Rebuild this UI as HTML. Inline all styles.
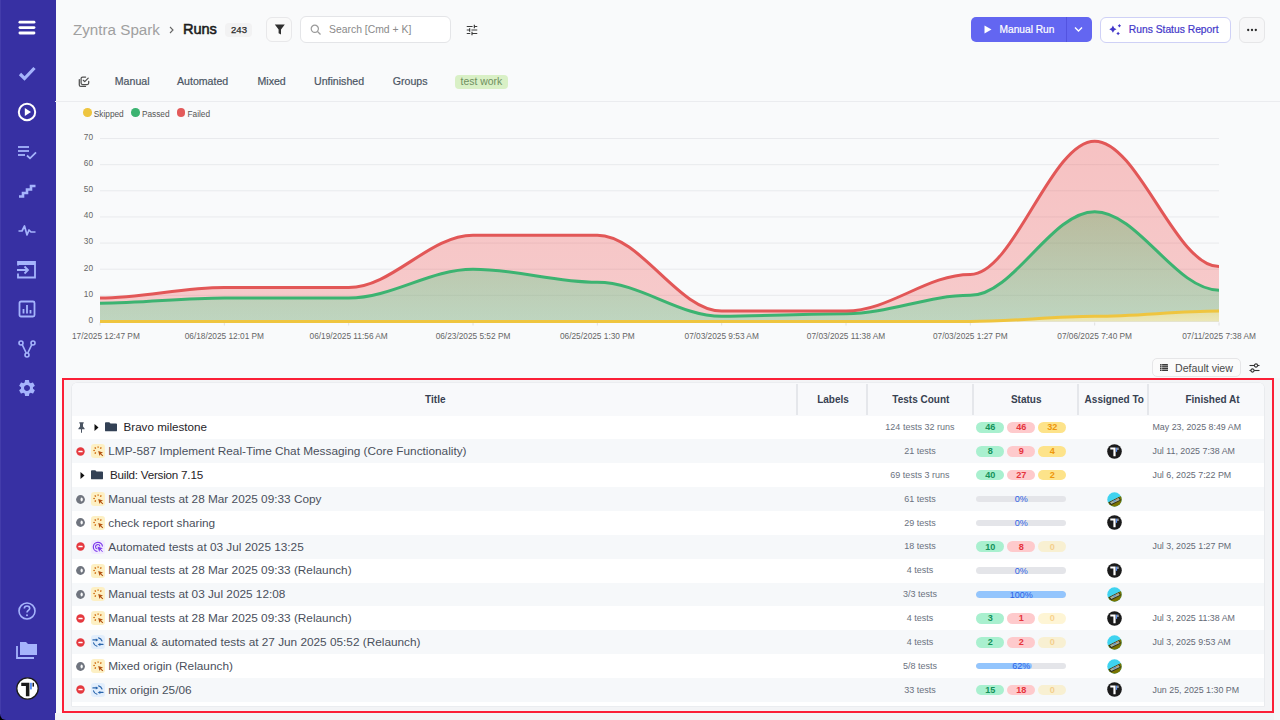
<!DOCTYPE html>
<html><head><meta charset="utf-8">
<style>
*{box-sizing:border-box;margin:0;padding:0}
html,body{width:1280px;height:720px;overflow:hidden}
body{background:#000;font-family:"Liberation Sans",sans-serif;position:relative}
.abs{position:absolute}
#main{position:absolute;left:55px;top:0;width:1225px;height:720px;background:#f9fafb}
#side{position:absolute;left:0;top:0;width:55.5px;height:720px;background:#3730a3;border-bottom-left-radius:6px}
#side svg{position:absolute}
.t{position:absolute;white-space:nowrap;line-height:1}
.btn{position:absolute;border-radius:5px}
</style></head>
<body>
<div id="main"></div>
<div id="side">
  <div class="abs" style="left:0;top:0;width:1px;height:714px;background:#433cab"></div>
  <!-- hamburger -->
  <svg style="left:18px;top:20px" width="18" height="16" viewBox="0 0 18 16"><g stroke="#fff" stroke-width="2.8" stroke-linecap="round"><line x1="1.9" y1="2.2" x2="16.0" y2="2.2"/><line x1="1.9" y1="7.6" x2="16.0" y2="7.6"/><line x1="1.9" y1="13.0" x2="16.0" y2="13.0"/></g></svg>
  <!-- check -->
  <svg style="left:18px;top:66px" width="18" height="15" viewBox="0 0 18 15"><path d="M2 8 L6.5 12.5 L16.5 2" fill="none" stroke="#a5b4fc" stroke-width="3.2"/></svg>
  <!-- play circle -->
  <svg style="left:17px;top:102px" width="20" height="20" viewBox="0 0 20 20"><circle cx="10" cy="10" r="8.2" fill="none" stroke="#fff" stroke-width="2"/><path d="M7.8 6 L14 10 L7.8 14 Z" fill="#fff"/></svg>
  <!-- list check -->
  <svg style="left:17px;top:145px" width="20" height="15" viewBox="0 0 20 15"><g stroke="#a5b4fc" stroke-width="1.8" fill="none"><line x1="1" y1="2" x2="12" y2="2"/><line x1="1" y1="6" x2="12" y2="6"/><line x1="1" y1="10" x2="8" y2="10"/><path d="M10 10.5 L13 13.3 L19 7.3"/></g></svg>
  <!-- stairs -->
  <svg style="left:18px;top:183px" width="19" height="15" viewBox="0 0 19 15"><path d="M1 13.5 H5 V10 H9 V6.5 H13 V3 H17.5" fill="none" stroke="#a5b4fc" stroke-width="2.6"/></svg>
  <!-- pulse -->
  <svg style="left:18px;top:224px" width="18" height="13" viewBox="0 0 18 13"><path d="M0.5 7 H4 L6.5 2 L9 11 L11 6 L13 8 H17.5" fill="none" stroke="#a5b4fc" stroke-width="1.7" stroke-linejoin="round"/></svg>
  <!-- import -->
  <svg style="left:16px;top:260px" width="21" height="19" viewBox="0 0 21 19"><path d="M2 5.5 V2 H19 V17.5 H2 V13.5" fill="none" stroke="#a5b4fc" stroke-width="1.8"/><line x1="2" y1="4" x2="19" y2="4" stroke="#a5b4fc" stroke-width="2"/><path d="M1 10 H12 M8.5 6.5 L12 10 L8.5 13.5" fill="none" stroke="#a5b4fc" stroke-width="1.8"/></svg>
  <!-- chart -->
  <svg style="left:18px;top:300px" width="18" height="18" viewBox="0 0 18 18"><rect x="1.5" y="1.5" width="15" height="15" rx="1.5" fill="none" stroke="#a5b4fc" stroke-width="1.8"/><g stroke="#a5b4fc" stroke-width="1.8"><line x1="5.5" y1="9" x2="5.5" y2="13.5"/><line x1="9" y1="5" x2="9" y2="13.5"/><line x1="12.5" y1="10" x2="12.5" y2="13.5"/></g></svg>
  <!-- fork -->
  <svg style="left:18px;top:340px" width="18" height="18" viewBox="0 0 18 18"><g fill="none" stroke="#a5b4fc" stroke-width="1.6"><circle cx="3" cy="3" r="2"/><circle cx="15" cy="3" r="2"/><circle cx="9" cy="15" r="2"/><path d="M4.2 4.6 L8.2 13 M13.8 4.6 L9.8 13"/></g></svg>
  <!-- gear -->
  <svg style="left:17px;top:378px" width="20" height="20" viewBox="0 0 24 24"><path fill="#a5b4fc" d="M19.14 12.94c.04-.3.06-.61.06-.94 0-.32-.02-.64-.07-.94l2.03-1.58a.49.49 0 0 0 .12-.61l-1.92-3.32a.488.488 0 0 0-.59-.22l-2.39.96c-.5-.38-1.03-.7-1.62-.94l-.36-2.54a.484.484 0 0 0-.48-.41h-3.84c-.24 0-.43.17-.47.41l-.36 2.54c-.59.24-1.13.57-1.62.94l-2.39-.96c-.22-.08-.47 0-.59.22L2.74 8.87c-.12.21-.08.47.12.61l2.03 1.58c-.05.3-.09.63-.09.94s.02.64.07.94l-2.03 1.58a.49.49 0 0 0-.12.61l1.92 3.32c.12.22.37.29.59.22l2.39-.96c.5.38 1.03.7 1.62.94l.36 2.54c.05.24.24.41.48.41h3.84c.24 0 .44-.17.47-.41l.36-2.54c.59-.24 1.13-.56 1.62-.94l2.39.96c.22.08.47 0 .59-.22l1.92-3.32c.12-.22.07-.47-.12-.61l-2.01-1.58zM12 15.6c-1.98 0-3.6-1.62-3.6-3.6s1.62-3.6 3.6-3.6 3.6 1.62 3.6 3.6-1.62 3.6-3.6 3.6z"/></svg>
  <!-- help -->
  <svg style="left:17px;top:601px" width="20" height="20" viewBox="0 0 20 20"><circle cx="10" cy="10" r="8" fill="none" stroke="#a5b4fc" stroke-width="1.6"/><path d="M7.3 7.6 C7.3 6 8.5 5 10 5 C11.6 5 12.7 6 12.7 7.4 C12.7 9.3 10 9.4 10 11.4" fill="none" stroke="#a5b4fc" stroke-width="1.6"/><circle cx="10" cy="14.2" r="1" fill="#a5b4fc"/></svg>
  <!-- folders -->
  <svg style="left:15px;top:640px" width="24" height="20" viewBox="0 0 24 20"><path d="M5 2 H11 L13 4 H22 V15 H5 Z" fill="#a5b4fc"/><path d="M2 6 V18 H19" fill="none" stroke="#a5b4fc" stroke-width="1.8"/></svg>
  <!-- avatar -->
  <svg style="left:16px;top:677px" width="23" height="23" viewBox="0 0 23 23"><circle cx="11.5" cy="11.5" r="10.7" fill="#fff" stroke="#1a1a1a" stroke-width="1.3"/><path d="M5.25 5.8 H13.4 V19.25 H9.9 V8.9 H5.25 Z" fill="#1a1a1a"/><rect x="14" y="5.8" width="1.9" height="6.6" fill="#5b93f5"/><rect x="16.5" y="5.8" width="1.5" height="3.8" fill="#1a1a1a"/></svg>
</div>
<div class="t" style="left:73px;top:22px;font-size:15.2px;color:#a0a0a0">Zyntra Spark</div>
<svg class="abs" style="left:168px;top:26px" width="7" height="8" viewBox="0 0 7 8"><path d="M2 1 L5 4 L2 7" fill="none" stroke="#666" stroke-width="1.1"/></svg>
<div class="t" style="left:183px;top:22px;font-size:14.6px;color:#1c1c1c;-webkit-text-stroke:0.55px #1c1c1c;letter-spacing:-0.1px">Runs</div>
<div class="abs" style="left:225px;top:23px;width:27px;height:14px;border-radius:4px;background:#f2f2f3"></div>
<div class="t" style="left:231px;top:24.5px;font-size:9.6px;color:#2a2a2a;-webkit-text-stroke:0.25px #2a2a2a">243</div>
<!-- filter btn -->
<div class="btn" style="left:266.4px;top:16.9px;width:25.2px;height:25.5px;background:#fafafa;border:1px solid #e8e8ea;border-radius:6px"></div>
<svg class="abs" style="left:273.5px;top:23px" width="12" height="13" viewBox="0 0 12 13"><path d="M0.8 1.5 H10.8 L7.0 6.4 V11.6 L4.6 10.3 V6.4 Z" fill="#303030"/></svg>
<!-- search -->
<div class="btn" style="left:300px;top:16px;width:151px;height:26.5px;background:#fff;border:1px solid #e4e5e8;border-radius:6px"></div>
<svg class="abs" style="left:310px;top:23.5px" width="12" height="12" viewBox="0 0 12 12"><circle cx="4.8" cy="4.8" r="3.6" fill="none" stroke="#9a9a9a" stroke-width="1.2"/><line x1="7.5" y1="7.5" x2="10.5" y2="10.5" stroke="#9a9a9a" stroke-width="1.3"/></svg>
<div class="t" style="left:329px;top:25.3px;font-size:10.4px;color:#8a8a8a">Search [Cmd + K]</div>
<!-- sliders icon -->
<svg class="abs" style="left:465px;top:23.2px" width="14" height="14" viewBox="0 0 24 24"><path fill="#3a3a3a" d="M3 17v2h6v-2H3zM3 5v2h10V5H3zm10 16v-2h8v-2h-8v-2h-2v6h2zM7 9v2H3v2h4v2h2V9H7zm14 4v-2H11v2h10zm-6-4h2V7h4V5h-4V3h-2v6z"/></svg>
<!-- manual run -->
<div class="btn" style="left:971px;top:17px;width:121px;height:25px;background:#6366f1;border-radius:5px"></div>
<div class="abs" style="left:1066px;top:17px;width:1px;height:25px;background:#5353e0"></div>
<svg class="abs" style="left:984px;top:25px" width="8" height="9" viewBox="0 0 8 9"><path d="M0.5 0.5 L7.5 4.5 L0.5 8.5 Z" fill="#fff"/></svg>
<div class="t" style="left:999.5px;top:24.5px;font-size:10.2px;color:#fff;-webkit-text-stroke:0.2px #fff">Manual Run</div>
<svg class="abs" style="left:1074px;top:26px" width="9" height="7" viewBox="0 0 9 7"><path d="M1 1.5 L4.5 5 L8 1.5" fill="none" stroke="#fff" stroke-width="1.4"/></svg>
<!-- runs status report -->
<div class="btn" style="left:1099.5px;top:16.6px;width:131.5px;height:26px;background:#fff;border:1px solid #cfd1f6;border-radius:6px"></div>
<svg class="abs" style="left:1109px;top:22px" width="14" height="15" viewBox="0 0 14 15"><path d="M3.9 3.6 L5.20 5.90 L7.5 7.2 L5.20 8.50 L3.9 10.8 L2.60 8.50 L0.2999999999999998 7.2 L2.60 5.90 Z M10.4 2.0999999999999996 L11.08 3.12 L12.1 3.8 L11.08 4.48 L10.4 5.5 L9.72 4.48 L8.700000000000001 3.8 L9.72 3.12 Z M9.1 9.7 L9.82 10.78 L10.9 11.5 L9.82 12.22 L9.1 13.3 L8.38 12.22 L7.3 11.5 L8.38 10.78 Z" fill="#4338ca"/></svg>
<div class="t" style="left:1128.75px;top:24.5px;font-size:10.3px;color:#4338ca;-webkit-text-stroke:0.2px #4338ca">Runs Status Report</div>
<!-- more -->
<div class="btn" style="left:1239px;top:16.75px;width:25.5px;height:25.75px;background:#f7f7f8;border:1px solid #e6e6e8;border-radius:6px"></div>
<svg class="abs" style="left:1246px;top:28px" width="12" height="4" viewBox="0 0 12 4"><circle cx="2.2" cy="2" r="1.15" fill="#2a2a2a"/><circle cx="6" cy="2" r="1.15" fill="#2a2a2a"/><circle cx="9.8" cy="2" r="1.15" fill="#2a2a2a"/></svg>
<!-- tabs -->
<svg class="abs" style="left:74px;top:72px" width="20" height="20" viewBox="0 0 20 20"><g fill="none" stroke="#505050" stroke-width="1.25" stroke-linecap="round" stroke-linejoin="round"><path d="M11.6 5.1 H8.6 Q7.1 5.1 7.1 6.6 V11.0 Q7.1 12.5 8.6 12.5 H13.2 Q14.7 12.5 14.7 11.0 V9.4"/><path d="M9.3 8.3 L10.7 9.6 L14.2 6.1"/><path d="M5.3 7.6 V12.9 Q5.3 14.4 6.8 14.4 H11.5"/></g></svg>
<div class="t" style="left:114.8px;top:76.3px;font-size:10.6px;color:#4b5563;-webkit-text-stroke:0.2px #4b5563">Manual</div>
<div class="t" style="left:177px;top:76.3px;font-size:10.6px;color:#4b5563;-webkit-text-stroke:0.2px #4b5563">Automated</div>
<div class="t" style="left:257.5px;top:76.3px;font-size:10.6px;color:#4b5563;-webkit-text-stroke:0.2px #4b5563">Mixed</div>
<div class="t" style="left:314px;top:76.3px;font-size:10.6px;color:#4b5563;-webkit-text-stroke:0.2px #4b5563">Unfinished</div>
<div class="t" style="left:392.8px;top:76.3px;font-size:10.6px;color:#4b5563;-webkit-text-stroke:0.2px #4b5563">Groups</div>
<div class="abs" style="left:455px;top:74.5px;width:53px;height:14.5px;border-radius:4px;background:#d9f0c6"></div>
<div class="t" style="left:460.6px;top:76.5px;font-size:10.4px;color:#6f8f5f">test work</div>
<div class="abs" style="left:55px;top:100.5px;width:1225px;height:1px;background:#ebecef"></div>
<!-- legend -->
<div class="abs" style="left:83px;top:108px;width:8.6px;height:8.6px;border-radius:50%;background:#eec540"></div>
<div class="t" style="left:93.75px;top:109.5px;font-size:8.3px;color:#555">Skipped</div>
<div class="abs" style="left:131px;top:108px;width:8.6px;height:8.6px;border-radius:50%;background:#3cb371"></div>
<div class="t" style="left:141.9px;top:109.5px;font-size:8.3px;color:#555">Passed</div>
<div class="abs" style="left:176.6px;top:108px;width:8.6px;height:8.6px;border-radius:50%;background:#e35a5a"></div>
<div class="t" style="left:187.5px;top:109.5px;font-size:8.3px;color:#555">Failed</div>
<!-- default view -->
<div class="btn" style="left:1152px;top:358px;width:89px;height:19px;background:#fbfbfb;border:1px solid #e6e6e8;border-radius:5px"></div>
<svg class="abs" style="left:1160px;top:364.3px" width="8" height="7" viewBox="0 0 8 7"><rect x="0" y="0" width="8" height="7" rx="0.6" fill="#3a3a3a"/><g fill="#fbfbfb"><rect x="0" y="1.6" width="8" height="0.5"/><rect x="0" y="3.3" width="8" height="0.5"/><rect x="0" y="5.0" width="8" height="0.5"/><rect x="1.6" y="0" width="0.5" height="7"/></g></svg>
<div class="t" style="left:1175px;top:362.7px;font-size:10.65px;color:#4a4a4a">Default view</div>
<svg class="abs" style="left:1249px;top:363px" width="11" height="10" viewBox="0 0 11 10"><g fill="none" stroke="#333" stroke-width="1.1"><line x1="0.5" y1="2.5" x2="10.5" y2="2.5"/><line x1="0.5" y1="7.5" x2="10.5" y2="7.5"/><circle cx="7" cy="2.5" r="1.6" fill="#f9fafb"/><circle cx="3.5" cy="7.5" r="1.6" fill="#f9fafb"/></g></svg>

<svg class="chart" width="1280" height="360" viewBox="0 0 1280 360" style="position:absolute;left:0;top:0">
<defs>
<linearGradient id="gr" x1="0" y1="138.5" x2="0" y2="321.5" gradientUnits="userSpaceOnUse">
<stop offset="0" stop-color="#ef4444" stop-opacity="0.31"/>
<stop offset="1" stop-color="#ef4444" stop-opacity="0.26"/>
</linearGradient>
<linearGradient id="gg" x1="0" y1="211.71" x2="0" y2="321.5" gradientUnits="userSpaceOnUse">
<stop offset="0" stop-color="rgb(43,164,64)" stop-opacity="0.30"/>
<stop offset="1" stop-color="rgb(59,238,164)" stop-opacity="0.30"/>
</linearGradient>
<linearGradient id="gy" x1="0" y1="311.04" x2="0" y2="321.5" gradientUnits="userSpaceOnUse">
<stop offset="0" stop-color="rgb(205,190,60)" stop-opacity="0.45"/>
<stop offset="1" stop-color="rgb(215,205,90)" stop-opacity="0.42"/>
</linearGradient>
</defs>
<g font-family="Liberation Sans" font-size="8.3" fill="#666"><line x1="100" y1="321.50" x2="1219" y2="321.50" stroke="#e9eaed" stroke-width="1"/><text x="93" y="322.80" text-anchor="end">0</text><line x1="100" y1="295.36" x2="1219" y2="295.36" stroke="#e9eaed" stroke-width="1"/><text x="93" y="296.66" text-anchor="end">10</text><line x1="100" y1="269.22" x2="1219" y2="269.22" stroke="#e9eaed" stroke-width="1"/><text x="93" y="270.52" text-anchor="end">20</text><line x1="100" y1="243.08" x2="1219" y2="243.08" stroke="#e9eaed" stroke-width="1"/><text x="93" y="244.38" text-anchor="end">30</text><line x1="100" y1="216.94" x2="1219" y2="216.94" stroke="#e9eaed" stroke-width="1"/><text x="93" y="218.24" text-anchor="end">40</text><line x1="100" y1="190.80" x2="1219" y2="190.80" stroke="#e9eaed" stroke-width="1"/><text x="93" y="192.10" text-anchor="end">50</text><line x1="100" y1="164.66" x2="1219" y2="164.66" stroke="#e9eaed" stroke-width="1"/><text x="93" y="165.96" text-anchor="end">60</text><line x1="100" y1="138.52" x2="1219" y2="138.52" stroke="#e9eaed" stroke-width="1"/><text x="93" y="139.82" text-anchor="end">70</text><line x1="100.00" y1="322.5" x2="100.00" y2="325.5" stroke="#e0e0e0"/><text x="72" y="339">17/2025 12:47 PM</text><line x1="224.33" y1="322.5" x2="224.33" y2="325.5" stroke="#e0e0e0"/><text x="224.33" y="339" text-anchor="middle">06/18/2025 12:01 PM</text><line x1="348.67" y1="322.5" x2="348.67" y2="325.5" stroke="#e0e0e0"/><text x="348.67" y="339" text-anchor="middle">06/19/2025 11:56 AM</text><line x1="473.00" y1="322.5" x2="473.00" y2="325.5" stroke="#e0e0e0"/><text x="473.00" y="339" text-anchor="middle">06/23/2025 5:52 PM</text><line x1="597.33" y1="322.5" x2="597.33" y2="325.5" stroke="#e0e0e0"/><text x="597.33" y="339" text-anchor="middle">06/25/2025 1:30 PM</text><line x1="721.67" y1="322.5" x2="721.67" y2="325.5" stroke="#e0e0e0"/><text x="721.67" y="339" text-anchor="middle">07/03/2025 9:53 AM</text><line x1="846.00" y1="322.5" x2="846.00" y2="325.5" stroke="#e0e0e0"/><text x="846.00" y="339" text-anchor="middle">07/03/2025 11:38 AM</text><line x1="970.33" y1="322.5" x2="970.33" y2="325.5" stroke="#e0e0e0"/><text x="970.33" y="339" text-anchor="middle">07/03/2025 1:27 PM</text><line x1="1094.67" y1="322.5" x2="1094.67" y2="325.5" stroke="#e0e0e0"/><text x="1094.67" y="339" text-anchor="middle">07/06/2025 7:40 PM</text><line x1="1219.00" y1="322.5" x2="1219.00" y2="325.5" stroke="#e0e0e0"/><text x="1219.00" y="339" text-anchor="middle">07/11/2025 7:38 AM</text></g>
<path d="M100.00,297.97 C143.52,297.97 180.82,287.52 224.33,287.52 C267.85,287.52 305.15,287.52 348.67,287.52 C392.18,287.52 429.48,235.24 473.00,235.24 C516.52,235.24 553.82,235.24 597.33,235.24 C640.85,235.24 678.15,311.04 721.67,311.04 C765.18,311.04 802.48,311.04 846.00,311.04 C889.52,311.04 926.82,274.45 970.33,274.45 C1013.85,274.45 1051.15,141.13 1094.67,141.13 C1138.18,141.13 1175.48,266.61 1219.00,266.61 L1219.00,311.04 C1175.48,311.04 1138.18,316.27 1094.67,316.27 C1051.15,316.27 1013.85,321.50 970.33,321.50 C926.82,321.50 889.52,321.50 846.00,321.50 C802.48,321.50 765.18,321.50 721.67,321.50 C678.15,321.50 640.85,321.50 597.33,321.50 C553.82,321.50 516.52,321.50 473.00,321.50 C429.48,321.50 392.18,321.50 348.67,321.50 C305.15,321.50 267.85,321.50 224.33,321.50 C180.82,321.50 143.52,321.50 100.00,321.50 Z" fill="url(#gr)"/>
<path d="M100.00,303.20 C143.52,303.20 180.82,297.97 224.33,297.97 C267.85,297.97 305.15,297.97 348.67,297.97 C392.18,297.97 429.48,269.22 473.00,269.22 C516.52,269.22 553.82,282.29 597.33,282.29 C640.85,282.29 678.15,316.27 721.67,316.27 C765.18,316.27 802.48,313.66 846.00,313.66 C889.52,313.66 926.82,295.36 970.33,295.36 C1013.85,295.36 1051.15,211.71 1094.67,211.71 C1138.18,211.71 1175.48,290.13 1219.00,290.13 L1219.00,311.04 C1175.48,311.04 1138.18,316.27 1094.67,316.27 C1051.15,316.27 1013.85,321.50 970.33,321.50 C926.82,321.50 889.52,321.50 846.00,321.50 C802.48,321.50 765.18,321.50 721.67,321.50 C678.15,321.50 640.85,321.50 597.33,321.50 C553.82,321.50 516.52,321.50 473.00,321.50 C429.48,321.50 392.18,321.50 348.67,321.50 C305.15,321.50 267.85,321.50 224.33,321.50 C180.82,321.50 143.52,321.50 100.00,321.50 Z" fill="url(#gg)"/>
<path d="M100.00,321.50 C143.52,321.50 180.82,321.50 224.33,321.50 C267.85,321.50 305.15,321.50 348.67,321.50 C392.18,321.50 429.48,321.50 473.00,321.50 C516.52,321.50 553.82,321.50 597.33,321.50 C640.85,321.50 678.15,321.50 721.67,321.50 C765.18,321.50 802.48,321.50 846.00,321.50 C889.52,321.50 926.82,321.50 970.33,321.50 C1013.85,321.50 1051.15,316.27 1094.67,316.27 C1138.18,316.27 1175.48,311.04 1219.00,311.04 L1219,321.5 L100,321.5 Z" fill="url(#gy)"/>
<path d="M100.00,321.50 C143.52,321.50 180.82,321.50 224.33,321.50 C267.85,321.50 305.15,321.50 348.67,321.50 C392.18,321.50 429.48,321.50 473.00,321.50 C516.52,321.50 553.82,321.50 597.33,321.50 C640.85,321.50 678.15,321.50 721.67,321.50 C765.18,321.50 802.48,321.50 846.00,321.50 C889.52,321.50 926.82,321.50 970.33,321.50 C1013.85,321.50 1051.15,316.27 1094.67,316.27 C1138.18,316.27 1175.48,311.04 1219.00,311.04" fill="none" stroke="#efc53f" stroke-width="3"/>
<path d="M100.00,303.20 C143.52,303.20 180.82,297.97 224.33,297.97 C267.85,297.97 305.15,297.97 348.67,297.97 C392.18,297.97 429.48,269.22 473.00,269.22 C516.52,269.22 553.82,282.29 597.33,282.29 C640.85,282.29 678.15,316.27 721.67,316.27 C765.18,316.27 802.48,313.66 846.00,313.66 C889.52,313.66 926.82,295.36 970.33,295.36 C1013.85,295.36 1051.15,211.71 1094.67,211.71 C1138.18,211.71 1175.48,290.13 1219.00,290.13" fill="none" stroke="#3cb371" stroke-width="3"/>
<path d="M100.00,297.97 C143.52,297.97 180.82,287.52 224.33,287.52 C267.85,287.52 305.15,287.52 348.67,287.52 C392.18,287.52 429.48,235.24 473.00,235.24 C516.52,235.24 553.82,235.24 597.33,235.24 C640.85,235.24 678.15,311.04 721.67,311.04 C765.18,311.04 802.48,311.04 846.00,311.04 C889.52,311.04 926.82,274.45 970.33,274.45 C1013.85,274.45 1051.15,141.13 1094.67,141.13 C1138.18,141.13 1175.48,266.61 1219.00,266.61" fill="none" stroke="#e25757" stroke-width="3"/>
</svg>
<div class="abs" style="left:55px;top:713px;width:1225px;height:7px;background:linear-gradient(#f3f4f6,#f1f2f4)"></div>
<div class="abs" style="left:1274px;top:378px;width:6px;height:342px;background:#f5f6f8"></div>
<div class="abs" style="left:62px;top:378px;width:1212px;height:335px;border:2px solid #fb1f37;background:#f3f4f6"></div>
<div class="abs" style="left:72.3px;top:383px;width:1192px;height:322.5px;background:#fff;border-top-left-radius:5px;border-top-right-radius:5px;box-shadow:0 0 0 0.6px #e3e5e9"></div>
<div class="abs" style="left:72.3px;top:383px;width:1192px;height:32.6px;background:#f8f9fb;border-top-left-radius:5px;border-top-right-radius:5px"></div>
<div class="abs" style="left:795.8px;top:384px;width:2px;height:31px;background:#e5e7eb"></div>
<div class="abs" style="left:865.9px;top:384px;width:2px;height:31px;background:#e5e7eb"></div>
<div class="abs" style="left:971.6px;top:384px;width:2px;height:31px;background:#e5e7eb"></div>
<div class="abs" style="left:1077.4px;top:384px;width:2px;height:31px;background:#e5e7eb"></div>
<div class="abs" style="left:1146.6px;top:384px;width:2px;height:31px;background:#e5e7eb"></div>
<div class="t" style="left:375.3px;top:395px;width:120px;text-align:center;font-size:10px;font-weight:700;color:#374151">Title</div>
<div class="t" style="left:773px;top:395px;width:120px;text-align:center;font-size:10px;font-weight:700;color:#374151">Labels</div>
<div class="t" style="left:860.9px;top:395px;width:120px;text-align:center;font-size:10px;font-weight:700;color:#374151">Tests Count</div>
<div class="t" style="left:966.2px;top:395px;width:120px;text-align:center;font-size:10px;font-weight:700;color:#374151">Status</div>
<div class="t" style="left:1054.25px;top:395px;width:120px;text-align:center;font-size:10px;font-weight:700;color:#374151">Assigned To</div>
<div class="t" style="left:1152.5px;top:395px;width:120px;text-align:center;font-size:10px;font-weight:700;color:#374151">Finished At</div>
<div class="abs" style="left:72.3px;top:415.50px;width:1192px;height:23.86px;background:#fff"></div>
<div class="abs" style="left:77.5px;top:421.93px;line-height:0"><svg width="7" height="11" viewBox="0 0 7 11"><path d="M1.3 0.3 H5.7 V1.4 H5 V4.6 L6.6 6.4 V7.2 H4 V10.8 H3 V7.2 H0.4 V6.4 L2 4.6 V1.4 H1.3 Z" fill="#4b5563"/></svg></div>
<div class="abs" style="left:94px;top:423.93px;line-height:0"><svg width="5" height="7" viewBox="0 0 5 7"><path d="M0.5 0 L4.5 3.5 L0.5 7 Z" fill="#111"/></svg></div>
<div class="abs" style="left:104.5px;top:422.43px;line-height:0"><svg width="12" height="9.5" viewBox="0 0 13 10"><path d="M0 1 Q0 0 1 0 H4.6 L6 1.4 H12 Q13 1.4 13 2.4 V9 Q13 10 12 10 H1 Q0 10 0 9 Z" fill="#334155"/></svg></div>
<div class="t" style="left:123.5px;top:421.23px;font-size:11.65px;color:#1f2328">Bravo milestone</div>
<div class="t" style="left:867.9px;top:423.13px;width:104px;text-align:center;font-size:9px;color:#6b7280">124 tests 32 runs</div>
<div class="abs" style="left:976.3px;top:422.08px;width:28px;height:10.7px;border-radius:6px;background:#a9f0cf;opacity:1"></div><div class="t" style="left:976.3px;top:423.33px;width:28px;text-align:center;font-size:9.1px;font-weight:700;color:#13925a;opacity:1">46</div>
<div class="abs" style="left:1007.25px;top:422.08px;width:28px;height:10.7px;border-radius:6px;background:#fecacc;opacity:1"></div><div class="t" style="left:1007.25px;top:423.33px;width:28px;text-align:center;font-size:9.1px;font-weight:700;color:#e5343d;opacity:1">46</div>
<div class="abs" style="left:1038.2px;top:422.08px;width:28px;height:10.7px;border-radius:6px;background:#fde38a;opacity:1"></div><div class="t" style="left:1038.2px;top:423.33px;width:28px;text-align:center;font-size:9.1px;font-weight:700;color:#ee960b;opacity:1">32</div>
<div class="t" style="left:1152.5px;top:423.13px;font-size:8.85px;color:#646a76">May 23, 2025 8:49 AM</div>
<div class="abs" style="left:72.3px;top:439.36px;width:1192px;height:23.86px;background:#f6f8fa"></div>
<div class="abs" style="left:76px;top:446.79px;line-height:0"><svg width="9" height="9" viewBox="0 0 9 9"><circle cx="4.5" cy="4.5" r="4.2" fill="#e5393f"/><rect x="2.3" y="3.8" width="4.4" height="1.45" rx="0.6" fill="#fff"/></svg></div>
<div class="abs" style="left:91.3px;top:444.29px;line-height:0"><svg width="14" height="14" viewBox="0 0 14 14"><rect width="14" height="14" rx="3.2" fill="#fdf0c4"/><g fill="#d2741c"><ellipse cx="4.3" cy="4.0" rx="0.75" ry="0.95" transform="rotate(-35 4.3 4.0)"/><ellipse cx="7.1" cy="3.1" rx="0.7" ry="0.95"/><ellipse cx="9.8" cy="4.0" rx="0.75" ry="0.95" transform="rotate(35 9.8 4.0)"/><ellipse cx="3.1" cy="6.5" rx="0.95" ry="0.7"/><ellipse cx="4.3" cy="9.0" rx="0.75" ry="0.95" transform="rotate(35 4.3 9.0)"/></g><path d="M7.2 6.9 L12.0 8.6 L10.0 9.5 L12.2 11.6 L11.5 12.3 L9.3 10.2 L8.5 12.0 Z" fill="#b4500f"/></svg></div>
<div class="t" style="left:108.3px;top:446.19px;font-size:11.8px;color:#4a505c">LMP-587 Implement Real-Time Chat Messaging (Core Functionality)</div>
<div class="t" style="left:867.9px;top:446.99px;width:104px;text-align:center;font-size:9px;color:#6b7280">21 tests</div>
<div class="abs" style="left:976.3px;top:445.94px;width:28px;height:10.7px;border-radius:6px;background:#a9f0cf;opacity:1"></div><div class="t" style="left:976.3px;top:447.19px;width:28px;text-align:center;font-size:9.1px;font-weight:700;color:#13925a;opacity:1">8</div>
<div class="abs" style="left:1007.25px;top:445.94px;width:28px;height:10.7px;border-radius:6px;background:#fecacc;opacity:1"></div><div class="t" style="left:1007.25px;top:447.19px;width:28px;text-align:center;font-size:9.1px;font-weight:700;color:#e5343d;opacity:1">9</div>
<div class="abs" style="left:1038.2px;top:445.94px;width:28px;height:10.7px;border-radius:6px;background:#fde38a;opacity:1"></div><div class="t" style="left:1038.2px;top:447.19px;width:28px;text-align:center;font-size:9.1px;font-weight:700;color:#ee960b;opacity:1">4</div>
<div class="abs" style="left:1106.5px;top:443.79px;line-height:0"><svg width="15" height="15" viewBox="0 0 15 15"><circle cx="7.5" cy="7.5" r="7.3" fill="#1b1b1b"/><path d="M3.3 3.6 H8.6 V12.2 H6.4 V5.6 H3.3 Z" fill="#fff"/><rect x="9.0" y="3.6" width="1.1" height="4.2" fill="#5b8ff0"/><rect x="10.5" y="3.6" width="0.9" height="2.4" fill="#fff"/></svg></div>
<div class="t" style="left:1152.5px;top:446.99px;font-size:8.85px;color:#646a76">Jul 11, 2025 7:38 AM</div>
<div class="abs" style="left:72.3px;top:463.22px;width:1192px;height:23.86px;background:#fff"></div>
<div class="abs" style="left:80px;top:471.65px;line-height:0"><svg width="5" height="7" viewBox="0 0 5 7"><path d="M0.5 0 L4.5 3.5 L0.5 7 Z" fill="#111"/></svg></div>
<div class="abs" style="left:90.5px;top:470.15px;line-height:0"><svg width="12" height="9.5" viewBox="0 0 13 10"><path d="M0 1 Q0 0 1 0 H4.6 L6 1.4 H12 Q13 1.4 13 2.4 V9 Q13 10 12 10 H1 Q0 10 0 9 Z" fill="#334155"/></svg></div>
<div class="t" style="left:110px;top:468.75px;font-size:11.65px;color:#1f2328;letter-spacing:-0.22px">Build: Version 7.15</div>
<div class="t" style="left:867.9px;top:470.85px;width:104px;text-align:center;font-size:9px;color:#6b7280">69 tests 3 runs</div>
<div class="abs" style="left:976.3px;top:469.80px;width:28px;height:10.7px;border-radius:6px;background:#a9f0cf;opacity:1"></div><div class="t" style="left:976.3px;top:471.05px;width:28px;text-align:center;font-size:9.1px;font-weight:700;color:#13925a;opacity:1">40</div>
<div class="abs" style="left:1007.25px;top:469.80px;width:28px;height:10.7px;border-radius:6px;background:#fecacc;opacity:1"></div><div class="t" style="left:1007.25px;top:471.05px;width:28px;text-align:center;font-size:9.1px;font-weight:700;color:#e5343d;opacity:1">27</div>
<div class="abs" style="left:1038.2px;top:469.80px;width:28px;height:10.7px;border-radius:6px;background:#fde38a;opacity:1"></div><div class="t" style="left:1038.2px;top:471.05px;width:28px;text-align:center;font-size:9.1px;font-weight:700;color:#ee960b;opacity:1">2</div>
<div class="t" style="left:1152.5px;top:470.85px;font-size:8.85px;color:#646a76">Jul 6, 2025 7:22 PM</div>
<div class="abs" style="left:72.3px;top:487.08px;width:1192px;height:23.86px;background:#f6f8fa"></div>
<div class="abs" style="left:76px;top:494.51px;line-height:0"><svg width="9" height="9" viewBox="0 0 9 9"><circle cx="4.5" cy="4.5" r="4.4" fill="#70757f"/><path d="M5.0 2.6 A1.9 1.9 0 0 1 5.0 6.4 Q3.9 4.5 5.0 2.6 Z" fill="#fafbfc"/></svg></div>
<div class="abs" style="left:91.3px;top:492.01px;line-height:0"><svg width="14" height="14" viewBox="0 0 14 14"><rect width="14" height="14" rx="3.2" fill="#fdf0c4"/><g fill="#d2741c"><ellipse cx="4.3" cy="4.0" rx="0.75" ry="0.95" transform="rotate(-35 4.3 4.0)"/><ellipse cx="7.1" cy="3.1" rx="0.7" ry="0.95"/><ellipse cx="9.8" cy="4.0" rx="0.75" ry="0.95" transform="rotate(35 9.8 4.0)"/><ellipse cx="3.1" cy="6.5" rx="0.95" ry="0.7"/><ellipse cx="4.3" cy="9.0" rx="0.75" ry="0.95" transform="rotate(35 4.3 9.0)"/></g><path d="M7.2 6.9 L12.0 8.6 L10.0 9.5 L12.2 11.6 L11.5 12.3 L9.3 10.2 L8.5 12.0 Z" fill="#b4500f"/></svg></div>
<div class="t" style="left:108.3px;top:493.91px;font-size:11.8px;color:#4a505c">Manual tests at 28 Mar 2025 09:33 Copy</div>
<div class="t" style="left:867.9px;top:494.71px;width:104px;text-align:center;font-size:9px;color:#6b7280">61 tests</div>
<div class="abs" style="left:976.3px;top:495.71px;width:90px;height:6.7px;border-radius:4px;background:#e4e5e9;overflow:hidden"><div style="width:0%;height:100%;background:#93c5fd;border-radius:4px"></div></div>
<div class="t" style="left:976.3px;top:495.21px;width:90px;text-align:center;font-size:9px;color:#2d62e6">0%</div>
<div class="abs" style="left:1106.5px;top:491.51px;line-height:0"><svg width="15" height="15" viewBox="0 0 15 15"><defs><clipPath id="avc3"><circle cx="7.5" cy="7.5" r="7.2"/></clipPath></defs><g clip-path="url(#avc3)"><rect width="15" height="15" fill="#3fd3f0"/><path d="M0 11 L15 3.5 V15 H0 Z" fill="#7a7400"/><path d="M1.8 10.2 L11.8 5.2 L14 8.2 L4 13.2 Z" fill="#2a2a22"/><path d="M3 10.2 L11.5 6 L12.8 7.9 L4.3 12.1 Z" fill="#a9b59a"/><path d="M6 9 L8.5 7.7 L9.3 8.8 L6.8 10.1 Z" fill="#5a8fd8"/><path d="M9 7.2 L11 6.2 L11.6 7 L9.6 8 Z" fill="#c98b5a"/></g></svg></div>
<div class="abs" style="left:72.3px;top:510.94px;width:1192px;height:23.86px;background:#fff"></div>
<div class="abs" style="left:76px;top:518.37px;line-height:0"><svg width="9" height="9" viewBox="0 0 9 9"><circle cx="4.5" cy="4.5" r="4.4" fill="#70757f"/><path d="M5.0 2.6 A1.9 1.9 0 0 1 5.0 6.4 Q3.9 4.5 5.0 2.6 Z" fill="#fafbfc"/></svg></div>
<div class="abs" style="left:91.3px;top:515.87px;line-height:0"><svg width="14" height="14" viewBox="0 0 14 14"><rect width="14" height="14" rx="3.2" fill="#fdf0c4"/><g fill="#d2741c"><ellipse cx="4.3" cy="4.0" rx="0.75" ry="0.95" transform="rotate(-35 4.3 4.0)"/><ellipse cx="7.1" cy="3.1" rx="0.7" ry="0.95"/><ellipse cx="9.8" cy="4.0" rx="0.75" ry="0.95" transform="rotate(35 9.8 4.0)"/><ellipse cx="3.1" cy="6.5" rx="0.95" ry="0.7"/><ellipse cx="4.3" cy="9.0" rx="0.75" ry="0.95" transform="rotate(35 4.3 9.0)"/></g><path d="M7.2 6.9 L12.0 8.6 L10.0 9.5 L12.2 11.6 L11.5 12.3 L9.3 10.2 L8.5 12.0 Z" fill="#b4500f"/></svg></div>
<div class="t" style="left:108.3px;top:517.77px;font-size:11.8px;color:#4a505c">check report sharing</div>
<div class="t" style="left:867.9px;top:518.57px;width:104px;text-align:center;font-size:9px;color:#6b7280">29 tests</div>
<div class="abs" style="left:976.3px;top:519.57px;width:90px;height:6.7px;border-radius:4px;background:#e4e5e9;overflow:hidden"><div style="width:0%;height:100%;background:#93c5fd;border-radius:4px"></div></div>
<div class="t" style="left:976.3px;top:519.07px;width:90px;text-align:center;font-size:9px;color:#2d62e6">0%</div>
<div class="abs" style="left:1106.5px;top:515.37px;line-height:0"><svg width="15" height="15" viewBox="0 0 15 15"><circle cx="7.5" cy="7.5" r="7.3" fill="#1b1b1b"/><path d="M3.3 3.6 H8.6 V12.2 H6.4 V5.6 H3.3 Z" fill="#fff"/><rect x="9.0" y="3.6" width="1.1" height="4.2" fill="#5b8ff0"/><rect x="10.5" y="3.6" width="0.9" height="2.4" fill="#fff"/></svg></div>
<div class="abs" style="left:72.3px;top:534.80px;width:1192px;height:23.86px;background:#f6f8fa"></div>
<div class="abs" style="left:76px;top:542.23px;line-height:0"><svg width="9" height="9" viewBox="0 0 9 9"><circle cx="4.5" cy="4.5" r="4.2" fill="#e5393f"/><rect x="2.3" y="3.8" width="4.4" height="1.45" rx="0.6" fill="#fff"/></svg></div>
<div class="abs" style="left:91.3px;top:539.73px;line-height:0"><svg width="14" height="14" viewBox="0 0 14 14"><rect width="14" height="14" rx="3" fill="#f1ebfd"/><g fill="none" stroke="#7c3aed" stroke-width="1.2"><path d="M11.5 6.5 A4.6 4.6 0 1 0 6.5 11.5"/><path d="M8.9 6.4 A2.2 2.2 0 1 0 6.4 8.9"/></g><path d="M6.4 6.4 L11.8 8.3 L9.7 9.2 L11.9 11.4 L11.3 12 L9.1 9.8 L8.2 11.9 Z" fill="#7c3aed"/></svg></div>
<div class="t" style="left:108.3px;top:541.63px;font-size:11.8px;color:#4a505c">Automated tests at 03 Jul 2025 13:25</div>
<div class="t" style="left:867.9px;top:542.43px;width:104px;text-align:center;font-size:9px;color:#6b7280">18 tests</div>
<div class="abs" style="left:976.3px;top:541.38px;width:28px;height:10.7px;border-radius:6px;background:#a9f0cf;opacity:1"></div><div class="t" style="left:976.3px;top:542.63px;width:28px;text-align:center;font-size:9.1px;font-weight:700;color:#13925a;opacity:1">10</div>
<div class="abs" style="left:1007.25px;top:541.38px;width:28px;height:10.7px;border-radius:6px;background:#fecacc;opacity:1"></div><div class="t" style="left:1007.25px;top:542.63px;width:28px;text-align:center;font-size:9.1px;font-weight:700;color:#e5343d;opacity:1">8</div>
<div class="abs" style="left:1038.2px;top:541.38px;width:28px;height:10.7px;border-radius:6px;background:#fde38a;opacity:0.36"></div><div class="t" style="left:1038.2px;top:542.63px;width:28px;text-align:center;font-size:9.1px;font-weight:700;color:#ee960b;opacity:0.36">0</div>
<div class="t" style="left:1152.5px;top:542.43px;font-size:8.85px;color:#646a76">Jul 3, 2025 1:27 PM</div>
<div class="abs" style="left:72.3px;top:558.66px;width:1192px;height:23.86px;background:#fff"></div>
<div class="abs" style="left:76px;top:566.09px;line-height:0"><svg width="9" height="9" viewBox="0 0 9 9"><circle cx="4.5" cy="4.5" r="4.4" fill="#70757f"/><path d="M5.0 2.6 A1.9 1.9 0 0 1 5.0 6.4 Q3.9 4.5 5.0 2.6 Z" fill="#fafbfc"/></svg></div>
<div class="abs" style="left:91.3px;top:563.59px;line-height:0"><svg width="14" height="14" viewBox="0 0 14 14"><rect width="14" height="14" rx="3.2" fill="#fdf0c4"/><g fill="#d2741c"><ellipse cx="4.3" cy="4.0" rx="0.75" ry="0.95" transform="rotate(-35 4.3 4.0)"/><ellipse cx="7.1" cy="3.1" rx="0.7" ry="0.95"/><ellipse cx="9.8" cy="4.0" rx="0.75" ry="0.95" transform="rotate(35 9.8 4.0)"/><ellipse cx="3.1" cy="6.5" rx="0.95" ry="0.7"/><ellipse cx="4.3" cy="9.0" rx="0.75" ry="0.95" transform="rotate(35 4.3 9.0)"/></g><path d="M7.2 6.9 L12.0 8.6 L10.0 9.5 L12.2 11.6 L11.5 12.3 L9.3 10.2 L8.5 12.0 Z" fill="#b4500f"/></svg></div>
<div class="t" style="left:108.3px;top:565.49px;font-size:11.8px;color:#4a505c">Manual tests at 28 Mar 2025 09:33 (Relaunch)</div>
<div class="t" style="left:867.9px;top:566.29px;width:104px;text-align:center;font-size:9px;color:#6b7280">4 tests</div>
<div class="abs" style="left:976.3px;top:567.29px;width:90px;height:6.7px;border-radius:4px;background:#e4e5e9;overflow:hidden"><div style="width:0%;height:100%;background:#93c5fd;border-radius:4px"></div></div>
<div class="t" style="left:976.3px;top:566.79px;width:90px;text-align:center;font-size:9px;color:#2d62e6">0%</div>
<div class="abs" style="left:1106.5px;top:563.09px;line-height:0"><svg width="15" height="15" viewBox="0 0 15 15"><circle cx="7.5" cy="7.5" r="7.3" fill="#1b1b1b"/><path d="M3.3 3.6 H8.6 V12.2 H6.4 V5.6 H3.3 Z" fill="#fff"/><rect x="9.0" y="3.6" width="1.1" height="4.2" fill="#5b8ff0"/><rect x="10.5" y="3.6" width="0.9" height="2.4" fill="#fff"/></svg></div>
<div class="abs" style="left:72.3px;top:582.52px;width:1192px;height:23.86px;background:#f6f8fa"></div>
<div class="abs" style="left:76px;top:589.95px;line-height:0"><svg width="9" height="9" viewBox="0 0 9 9"><circle cx="4.5" cy="4.5" r="4.4" fill="#70757f"/><path d="M5.0 2.6 A1.9 1.9 0 0 1 5.0 6.4 Q3.9 4.5 5.0 2.6 Z" fill="#fafbfc"/></svg></div>
<div class="abs" style="left:91.3px;top:587.45px;line-height:0"><svg width="14" height="14" viewBox="0 0 14 14"><rect width="14" height="14" rx="3.2" fill="#fdf0c4"/><g fill="#d2741c"><ellipse cx="4.3" cy="4.0" rx="0.75" ry="0.95" transform="rotate(-35 4.3 4.0)"/><ellipse cx="7.1" cy="3.1" rx="0.7" ry="0.95"/><ellipse cx="9.8" cy="4.0" rx="0.75" ry="0.95" transform="rotate(35 9.8 4.0)"/><ellipse cx="3.1" cy="6.5" rx="0.95" ry="0.7"/><ellipse cx="4.3" cy="9.0" rx="0.75" ry="0.95" transform="rotate(35 4.3 9.0)"/></g><path d="M7.2 6.9 L12.0 8.6 L10.0 9.5 L12.2 11.6 L11.5 12.3 L9.3 10.2 L8.5 12.0 Z" fill="#b4500f"/></svg></div>
<div class="t" style="left:108.3px;top:589.35px;font-size:11.8px;color:#4a505c">Manual tests at 03 Jul 2025 12:08</div>
<div class="t" style="left:867.9px;top:590.15px;width:104px;text-align:center;font-size:9px;color:#6b7280">3/3 tests</div>
<div class="abs" style="left:976.3px;top:591.15px;width:90px;height:6.7px;border-radius:4px;background:#e4e5e9;overflow:hidden"><div style="width:100%;height:100%;background:#93c5fd;border-radius:4px"></div></div>
<div class="t" style="left:976.3px;top:590.65px;width:90px;text-align:center;font-size:9px;color:#2d62e6">100%</div>
<div class="abs" style="left:1106.5px;top:586.95px;line-height:0"><svg width="15" height="15" viewBox="0 0 15 15"><defs><clipPath id="avc7"><circle cx="7.5" cy="7.5" r="7.2"/></clipPath></defs><g clip-path="url(#avc7)"><rect width="15" height="15" fill="#3fd3f0"/><path d="M0 11 L15 3.5 V15 H0 Z" fill="#7a7400"/><path d="M1.8 10.2 L11.8 5.2 L14 8.2 L4 13.2 Z" fill="#2a2a22"/><path d="M3 10.2 L11.5 6 L12.8 7.9 L4.3 12.1 Z" fill="#a9b59a"/><path d="M6 9 L8.5 7.7 L9.3 8.8 L6.8 10.1 Z" fill="#5a8fd8"/><path d="M9 7.2 L11 6.2 L11.6 7 L9.6 8 Z" fill="#c98b5a"/></g></svg></div>
<div class="abs" style="left:72.3px;top:606.38px;width:1192px;height:23.86px;background:#fff"></div>
<div class="abs" style="left:76px;top:613.81px;line-height:0"><svg width="9" height="9" viewBox="0 0 9 9"><circle cx="4.5" cy="4.5" r="4.2" fill="#e5393f"/><rect x="2.3" y="3.8" width="4.4" height="1.45" rx="0.6" fill="#fff"/></svg></div>
<div class="abs" style="left:91.3px;top:611.31px;line-height:0"><svg width="14" height="14" viewBox="0 0 14 14"><rect width="14" height="14" rx="3.2" fill="#fdf0c4"/><g fill="#d2741c"><ellipse cx="4.3" cy="4.0" rx="0.75" ry="0.95" transform="rotate(-35 4.3 4.0)"/><ellipse cx="7.1" cy="3.1" rx="0.7" ry="0.95"/><ellipse cx="9.8" cy="4.0" rx="0.75" ry="0.95" transform="rotate(35 9.8 4.0)"/><ellipse cx="3.1" cy="6.5" rx="0.95" ry="0.7"/><ellipse cx="4.3" cy="9.0" rx="0.75" ry="0.95" transform="rotate(35 4.3 9.0)"/></g><path d="M7.2 6.9 L12.0 8.6 L10.0 9.5 L12.2 11.6 L11.5 12.3 L9.3 10.2 L8.5 12.0 Z" fill="#b4500f"/></svg></div>
<div class="t" style="left:108.3px;top:613.21px;font-size:11.8px;color:#4a505c">Manual tests at 28 Mar 2025 09:33 (Relaunch)</div>
<div class="t" style="left:867.9px;top:614.01px;width:104px;text-align:center;font-size:9px;color:#6b7280">4 tests</div>
<div class="abs" style="left:976.3px;top:612.96px;width:28px;height:10.7px;border-radius:6px;background:#a9f0cf;opacity:1"></div><div class="t" style="left:976.3px;top:614.21px;width:28px;text-align:center;font-size:9.1px;font-weight:700;color:#13925a;opacity:1">3</div>
<div class="abs" style="left:1007.25px;top:612.96px;width:28px;height:10.7px;border-radius:6px;background:#fecacc;opacity:1"></div><div class="t" style="left:1007.25px;top:614.21px;width:28px;text-align:center;font-size:9.1px;font-weight:700;color:#e5343d;opacity:1">1</div>
<div class="abs" style="left:1038.2px;top:612.96px;width:28px;height:10.7px;border-radius:6px;background:#fde38a;opacity:0.36"></div><div class="t" style="left:1038.2px;top:614.21px;width:28px;text-align:center;font-size:9.1px;font-weight:700;color:#ee960b;opacity:0.36">0</div>
<div class="abs" style="left:1106.5px;top:610.81px;line-height:0"><svg width="15" height="15" viewBox="0 0 15 15"><circle cx="7.5" cy="7.5" r="7.3" fill="#1b1b1b"/><path d="M3.3 3.6 H8.6 V12.2 H6.4 V5.6 H3.3 Z" fill="#fff"/><rect x="9.0" y="3.6" width="1.1" height="4.2" fill="#5b8ff0"/><rect x="10.5" y="3.6" width="0.9" height="2.4" fill="#fff"/></svg></div>
<div class="t" style="left:1152.5px;top:614.01px;font-size:8.85px;color:#646a76">Jul 3, 2025 11:38 AM</div>
<div class="abs" style="left:72.3px;top:630.24px;width:1192px;height:23.86px;background:#f6f8fa"></div>
<div class="abs" style="left:76px;top:637.67px;line-height:0"><svg width="9" height="9" viewBox="0 0 9 9"><circle cx="4.5" cy="4.5" r="4.2" fill="#e5393f"/><rect x="2.3" y="3.8" width="4.4" height="1.45" rx="0.6" fill="#fff"/></svg></div>
<div class="abs" style="left:91.3px;top:635.17px;line-height:0"><svg width="14" height="14" viewBox="0 0 14 14"><rect width="14" height="14" rx="3.2" fill="#e2eefc"/><g fill="none" stroke="#2a66ad" stroke-width="1.15" stroke-linecap="round"><path d="M1.9 4.9 H5.4"/><path d="M7.6 2.9 A4.6 4.6 0 0 1 11.0 6.0"/><path d="M8.6 9.4 H12.0"/><path d="M2.5 7.9 A4.6 4.6 0 0 0 6.0 11.2"/></g><path d="M4.8 3.4 L7.4 4.9 L4.8 6.4 Z" fill="#2a66ad"/><path d="M9.3 7.9 L6.7 9.4 L9.3 10.9 Z" fill="#2a66ad"/></svg></div>
<div class="t" style="left:108.3px;top:637.07px;font-size:11.8px;color:#4a505c">Manual &amp; automated tests at 27 Jun 2025 05:52 (Relaunch)</div>
<div class="t" style="left:867.9px;top:637.87px;width:104px;text-align:center;font-size:9px;color:#6b7280">4 tests</div>
<div class="abs" style="left:976.3px;top:636.82px;width:28px;height:10.7px;border-radius:6px;background:#a9f0cf;opacity:1"></div><div class="t" style="left:976.3px;top:638.07px;width:28px;text-align:center;font-size:9.1px;font-weight:700;color:#13925a;opacity:1">2</div>
<div class="abs" style="left:1007.25px;top:636.82px;width:28px;height:10.7px;border-radius:6px;background:#fecacc;opacity:1"></div><div class="t" style="left:1007.25px;top:638.07px;width:28px;text-align:center;font-size:9.1px;font-weight:700;color:#e5343d;opacity:1">2</div>
<div class="abs" style="left:1038.2px;top:636.82px;width:28px;height:10.7px;border-radius:6px;background:#fde38a;opacity:0.36"></div><div class="t" style="left:1038.2px;top:638.07px;width:28px;text-align:center;font-size:9.1px;font-weight:700;color:#ee960b;opacity:0.36">0</div>
<div class="abs" style="left:1106.5px;top:634.67px;line-height:0"><svg width="15" height="15" viewBox="0 0 15 15"><defs><clipPath id="avc9"><circle cx="7.5" cy="7.5" r="7.2"/></clipPath></defs><g clip-path="url(#avc9)"><rect width="15" height="15" fill="#3fd3f0"/><path d="M0 11 L15 3.5 V15 H0 Z" fill="#7a7400"/><path d="M1.8 10.2 L11.8 5.2 L14 8.2 L4 13.2 Z" fill="#2a2a22"/><path d="M3 10.2 L11.5 6 L12.8 7.9 L4.3 12.1 Z" fill="#a9b59a"/><path d="M6 9 L8.5 7.7 L9.3 8.8 L6.8 10.1 Z" fill="#5a8fd8"/><path d="M9 7.2 L11 6.2 L11.6 7 L9.6 8 Z" fill="#c98b5a"/></g></svg></div>
<div class="t" style="left:1152.5px;top:637.87px;font-size:8.85px;color:#646a76">Jul 3, 2025 9:53 AM</div>
<div class="abs" style="left:72.3px;top:654.10px;width:1192px;height:23.86px;background:#fff"></div>
<div class="abs" style="left:76px;top:661.53px;line-height:0"><svg width="9" height="9" viewBox="0 0 9 9"><circle cx="4.5" cy="4.5" r="4.4" fill="#70757f"/><path d="M5.0 2.6 A1.9 1.9 0 0 1 5.0 6.4 Q3.9 4.5 5.0 2.6 Z" fill="#fafbfc"/></svg></div>
<div class="abs" style="left:91.3px;top:659.03px;line-height:0"><svg width="14" height="14" viewBox="0 0 14 14"><rect width="14" height="14" rx="3.2" fill="#fdf0c4"/><g fill="#d2741c"><ellipse cx="4.3" cy="4.0" rx="0.75" ry="0.95" transform="rotate(-35 4.3 4.0)"/><ellipse cx="7.1" cy="3.1" rx="0.7" ry="0.95"/><ellipse cx="9.8" cy="4.0" rx="0.75" ry="0.95" transform="rotate(35 9.8 4.0)"/><ellipse cx="3.1" cy="6.5" rx="0.95" ry="0.7"/><ellipse cx="4.3" cy="9.0" rx="0.75" ry="0.95" transform="rotate(35 4.3 9.0)"/></g><path d="M7.2 6.9 L12.0 8.6 L10.0 9.5 L12.2 11.6 L11.5 12.3 L9.3 10.2 L8.5 12.0 Z" fill="#b4500f"/></svg></div>
<div class="t" style="left:108.3px;top:660.93px;font-size:11.8px;color:#4a505c">Mixed origin (Relaunch)</div>
<div class="t" style="left:867.9px;top:661.73px;width:104px;text-align:center;font-size:9px;color:#6b7280">5/8 tests</div>
<div class="abs" style="left:976.3px;top:662.73px;width:90px;height:6.7px;border-radius:4px;background:#e4e5e9;overflow:hidden"><div style="width:62%;height:100%;background:#93c5fd;border-radius:4px"></div></div>
<div class="t" style="left:976.3px;top:662.23px;width:90px;text-align:center;font-size:9px;color:#2d62e6">62%</div>
<div class="abs" style="left:1106.5px;top:658.53px;line-height:0"><svg width="15" height="15" viewBox="0 0 15 15"><defs><clipPath id="avc10"><circle cx="7.5" cy="7.5" r="7.2"/></clipPath></defs><g clip-path="url(#avc10)"><rect width="15" height="15" fill="#3fd3f0"/><path d="M0 11 L15 3.5 V15 H0 Z" fill="#7a7400"/><path d="M1.8 10.2 L11.8 5.2 L14 8.2 L4 13.2 Z" fill="#2a2a22"/><path d="M3 10.2 L11.5 6 L12.8 7.9 L4.3 12.1 Z" fill="#a9b59a"/><path d="M6 9 L8.5 7.7 L9.3 8.8 L6.8 10.1 Z" fill="#5a8fd8"/><path d="M9 7.2 L11 6.2 L11.6 7 L9.6 8 Z" fill="#c98b5a"/></g></svg></div>
<div class="abs" style="left:72.3px;top:677.96px;width:1192px;height:23.86px;background:#f6f8fa"></div>
<div class="abs" style="left:76px;top:685.39px;line-height:0"><svg width="9" height="9" viewBox="0 0 9 9"><circle cx="4.5" cy="4.5" r="4.2" fill="#e5393f"/><rect x="2.3" y="3.8" width="4.4" height="1.45" rx="0.6" fill="#fff"/></svg></div>
<div class="abs" style="left:91.3px;top:682.89px;line-height:0"><svg width="14" height="14" viewBox="0 0 14 14"><rect width="14" height="14" rx="3.2" fill="#e2eefc"/><g fill="none" stroke="#2a66ad" stroke-width="1.15" stroke-linecap="round"><path d="M1.9 4.9 H5.4"/><path d="M7.6 2.9 A4.6 4.6 0 0 1 11.0 6.0"/><path d="M8.6 9.4 H12.0"/><path d="M2.5 7.9 A4.6 4.6 0 0 0 6.0 11.2"/></g><path d="M4.8 3.4 L7.4 4.9 L4.8 6.4 Z" fill="#2a66ad"/><path d="M9.3 7.9 L6.7 9.4 L9.3 10.9 Z" fill="#2a66ad"/></svg></div>
<div class="t" style="left:108.3px;top:684.79px;font-size:11.8px;color:#4a505c">mix origin 25/06</div>
<div class="t" style="left:867.9px;top:685.59px;width:104px;text-align:center;font-size:9px;color:#6b7280">33 tests</div>
<div class="abs" style="left:976.3px;top:684.54px;width:28px;height:10.7px;border-radius:6px;background:#a9f0cf;opacity:1"></div><div class="t" style="left:976.3px;top:685.79px;width:28px;text-align:center;font-size:9.1px;font-weight:700;color:#13925a;opacity:1">15</div>
<div class="abs" style="left:1007.25px;top:684.54px;width:28px;height:10.7px;border-radius:6px;background:#fecacc;opacity:1"></div><div class="t" style="left:1007.25px;top:685.79px;width:28px;text-align:center;font-size:9.1px;font-weight:700;color:#e5343d;opacity:1">18</div>
<div class="abs" style="left:1038.2px;top:684.54px;width:28px;height:10.7px;border-radius:6px;background:#fde38a;opacity:0.36"></div><div class="t" style="left:1038.2px;top:685.79px;width:28px;text-align:center;font-size:9.1px;font-weight:700;color:#ee960b;opacity:0.36">0</div>
<div class="abs" style="left:1106.5px;top:682.39px;line-height:0"><svg width="15" height="15" viewBox="0 0 15 15"><circle cx="7.5" cy="7.5" r="7.3" fill="#1b1b1b"/><path d="M3.3 3.6 H8.6 V12.2 H6.4 V5.6 H3.3 Z" fill="#fff"/><rect x="9.0" y="3.6" width="1.1" height="4.2" fill="#5b8ff0"/><rect x="10.5" y="3.6" width="0.9" height="2.4" fill="#fff"/></svg></div>
<div class="t" style="left:1152.5px;top:685.59px;font-size:8.85px;color:#646a76">Jun 25, 2025 1:30 PM</div>
</body></html>
